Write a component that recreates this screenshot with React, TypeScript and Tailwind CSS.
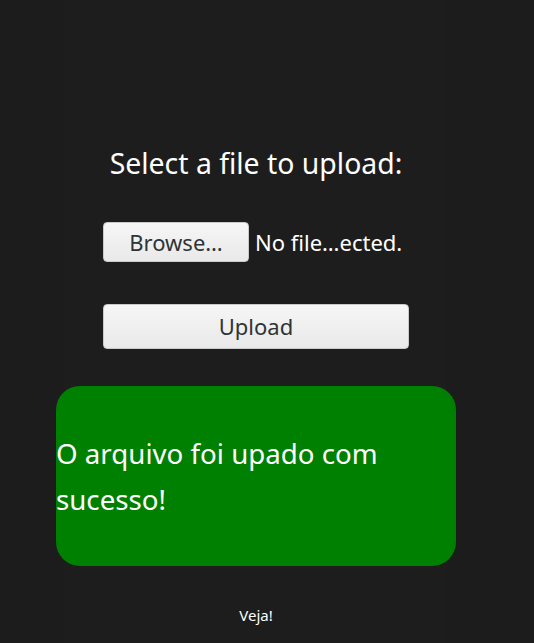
import React from "react";

const font = { fontFamily: '"Noto Sans", "Open Sans", sans-serif' };

const App = () => {
  return (
    <div
      className="min-h-screen w-full bg-[linear-gradient(to_right,#1c1c1c_63px,#1d1d1d_63px,#1d1d1d_446px,#1c1c1c_446px)] text-white"
      style={font}
    >
      <div className="ml-[56px] flex w-[400px] flex-col items-center pt-[143px] pb-[18px]">
        <h1 className="h-[40px] text-[28.4px] leading-[40px] font-normal">Select a file to upload:</h1>

        <div className="mt-[39px] flex h-[40px] w-[306px] items-center">
          <button className="h-[40px] w-[146px] rounded-[4px] border border-[#c9c9c9] bg-gradient-to-b from-[#f6f6f6] to-[#e9e9e9] text-[22px] text-[#2e3436]">
            Browse…
          </button>
          <span className="ml-[6px] text-[22px] whitespace-nowrap">No file…ected.</span>
        </div>

        <button className="mt-[42px] h-[45px] w-[306px] rounded-[4px] border border-[#c9c9c9] bg-gradient-to-b from-[#f6f6f6] to-[#e9e9e9] text-[22px] text-[#2e3436]">
          Upload
        </button>

        <div className="mt-[37px] h-[180px] w-[400px] rounded-[24px] bg-[#008000] py-[44px]">
          <p className="w-[340px] text-[27.7px] leading-[46px]">O arquivo foi upado com sucesso!</p>
        </div>

        <p className="mt-[39px] text-[15px] leading-[20px]">Veja!</p>
      </div>
    </div>
  );
};

export default App;
